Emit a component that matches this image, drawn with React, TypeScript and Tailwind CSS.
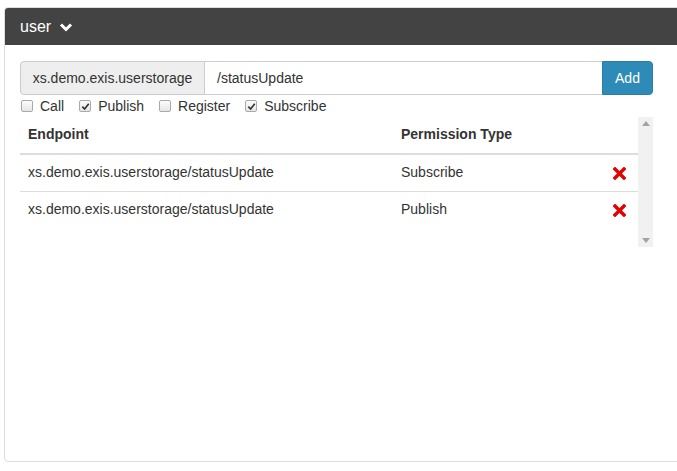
import React from "react";

const permissions = [
  { endpoint: "xs.demo.exis.userstorage/statusUpdate", type: "Subscribe" },
  { endpoint: "xs.demo.exis.userstorage/statusUpdate", type: "Publish" },
];

const options = [
  { label: "Call", checked: false },
  { label: "Publish", checked: true },
  { label: "Register", checked: false },
  { label: "Subscribe", checked: true },
];

const CheckBox = ({ checked }: { checked: boolean }) => (
  <span className="w-[12px] h-[12px] rounded-[2px] border border-[#a9a9a9] bg-gradient-to-b from-[#fcfcfc] to-[#e6e6e6] flex items-center justify-center">
    {checked && (
      <svg width="9" height="9" viewBox="0 0 10 10">
        <path d="M1.5 5.2 L4 7.8 L8.6 2" fill="none" stroke="#333" strokeWidth="1.8" />
      </svg>
    )}
  </span>
);

const RemoveIcon = () => (
  <svg width="13" height="13" viewBox="0 0 13 13">
    <path d="M2 2 L11 11 M11 2 L2 11" stroke="#e30000" strokeWidth="3.4" strokeLinecap="square" />
  </svg>
);

const App = () => {
  return (
    <div className="w-[677px] h-[471px] overflow-hidden bg-white pt-[7px] pl-[4px] text-[14px] text-[#333] font-['Liberation_Sans',Arial,sans-serif]">
      <div className="w-[700px] h-[455px] border border-[#ddd] rounded-[4px] overflow-hidden">
        {/* panel heading */}
        <div className="h-[37px] bg-[#434343] flex items-center pl-[15px] gap-[8px] text-white">
          <span className="text-[16px]">user</span>
          <svg width="14" height="10" viewBox="0 0 14 10">
            <path d="M2 2.5 L7 7.5 L12 2.5" fill="none" stroke="#fff" strokeWidth="3" />
          </svg>
        </div>

        <div className="px-[15px] pt-[16px] w-[663px]">
          {/* input group */}
          <div className="flex h-[34px]">
            <span className="w-[185px] bg-[#eee] border border-[#ccc] rounded-l-[4px] flex items-center justify-center">
              xs.demo.exis.userstorage
            </span>
            <span className="flex-1 border-y border-[#ccc] flex items-center pl-[12px]">
              /statusUpdate
            </span>
            <button className="w-[51px] bg-[#2e8bb7] border border-[#2a7fa8] rounded-r-[4px] text-white">
              Add
            </button>
          </div>

          {/* permission checkboxes */}
          <div className="flex items-center h-[20px] mt-[1px] pl-[1px] gap-[15px]">
            {options.map((o) => (
              <label key={o.label} className="flex items-center gap-[7px]">
                <CheckBox checked={o.checked} />
                <span>{o.label}</span>
              </label>
            ))}
          </div>

          {/* table with scrollbar */}
          <div className="flex h-[130px] mt-[1px]">
            <div className="w-[618px]">
              <div className="grid grid-cols-[373px_212px_33px] border-b-2 border-[#ddd] font-bold">
                <div className="px-[8px] pt-[7px] pb-[9px] leading-[20px]">Endpoint</div>
                <div className="px-[8px] pt-[7px] pb-[9px] leading-[20px]">Permission Type</div>
                <div />
              </div>
              {permissions.map((p, i) => (
                <div
                  key={i}
                  className={
                    "grid grid-cols-[373px_212px_33px] " + (i > 0 ? "border-t border-[#ddd]" : "")
                  }
                >
                  <div className="px-[8px] pt-[7px] pb-[9px] leading-[20px]">{p.endpoint}</div>
                  <div className="px-[8px] pt-[7px] pb-[9px] leading-[20px]">{p.type}</div>
                  <div className="px-[8px] flex items-center">
                    <RemoveIcon />
                  </div>
                </div>
              ))}
            </div>
            <div className="w-[15px] bg-[#f1f1f1] flex flex-col items-center justify-between py-[4px]">
              <svg width="8" height="5" viewBox="0 0 8 5">
                <path d="M0 5 L4 0 L8 5 Z" fill="#a3a3a3" />
              </svg>
              <svg width="8" height="5" viewBox="0 0 8 5">
                <path d="M0 0 L4 5 L8 0 Z" fill="#a3a3a3" />
              </svg>
            </div>
          </div>
        </div>
      </div>
    </div>
  );
};

export default App;
